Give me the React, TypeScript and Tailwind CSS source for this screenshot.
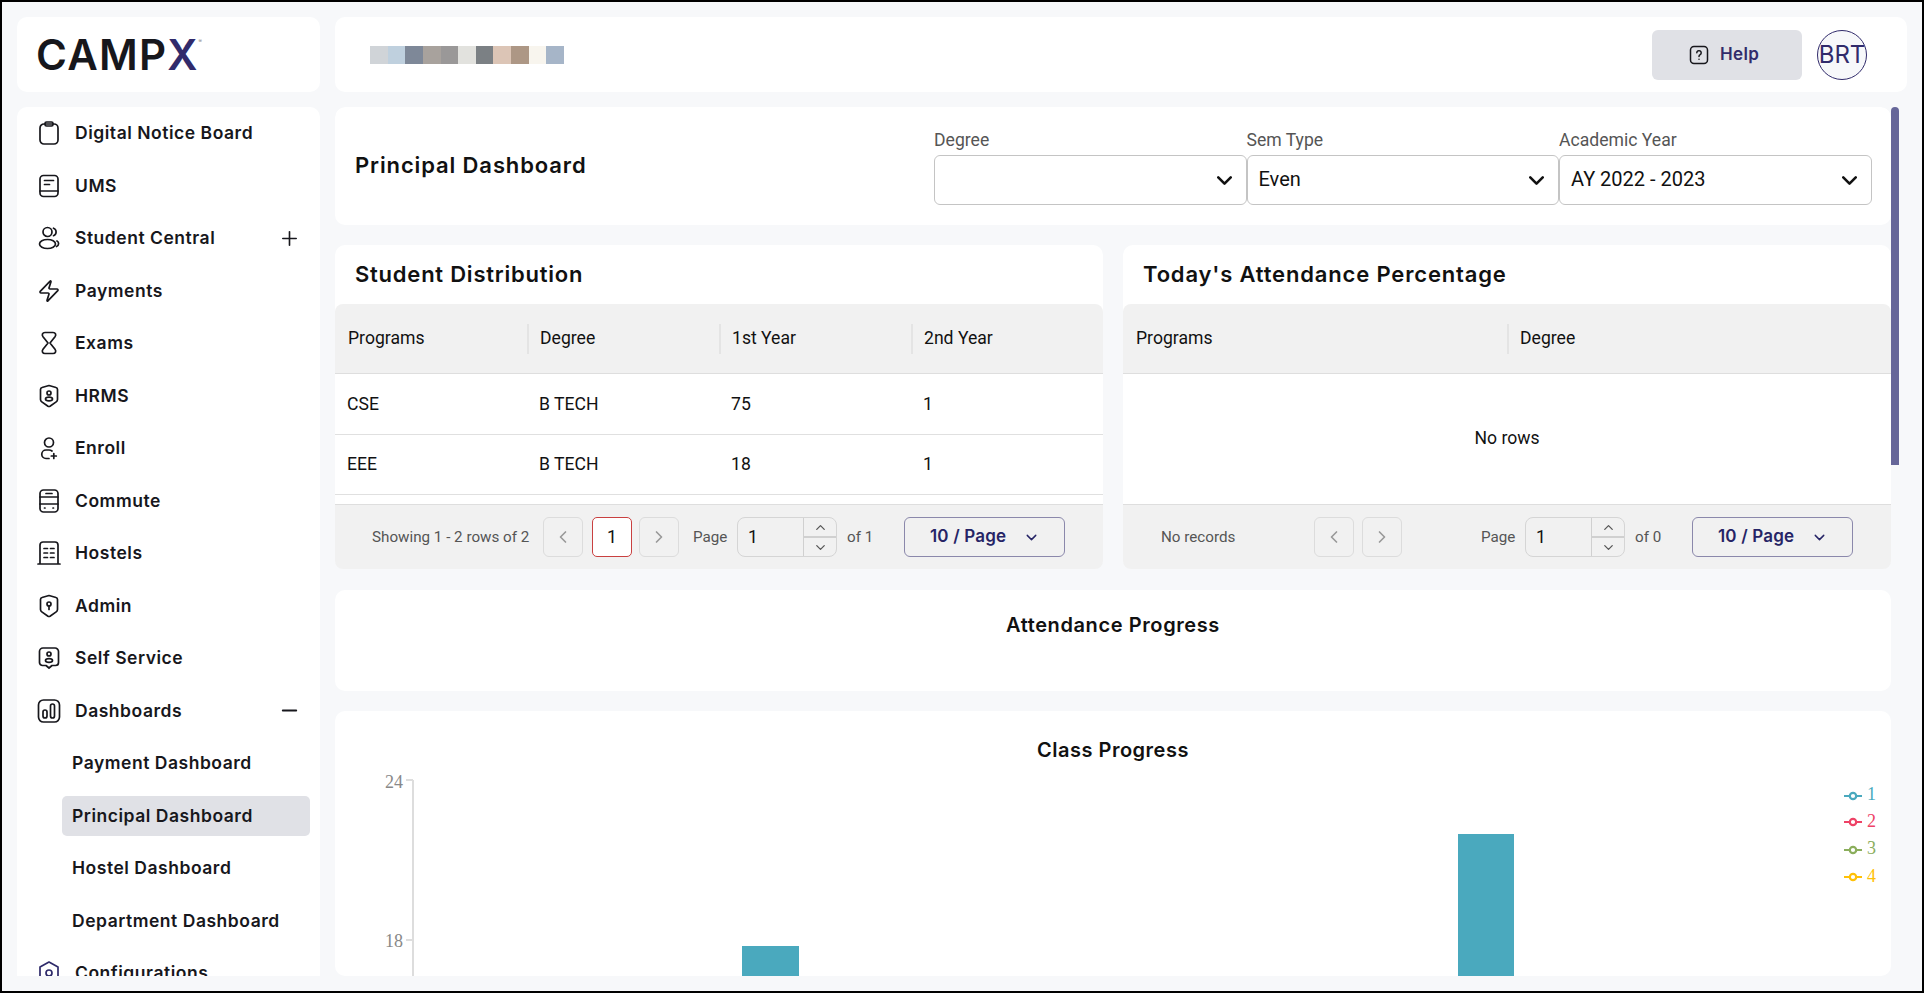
import React from "react";
import { Zap, ChevronDown, ChevronUp, ChevronLeft, ChevronRight, Plus, Minus } from "lucide-react";

const S = ({ children, color = "#17171c" }: { children: React.ReactNode; color?: string }) => (
  <svg width="24" height="24" viewBox="0 0 24 24" fill="none" stroke={color} strokeWidth="1.7" strokeLinecap="round" strokeLinejoin="round" className="shrink-0">
    {children}
  </svg>
);

const shield = "M12 1.5 19 3.5a2 2 0 0 1 1.5 2v10a3 3 0 0 1-1.3 2.4L13 22.2a2 2 0 0 1-2 0l-6.2-4.3a3 3 0 0 1-1.3-2.4v-10a2 2 0 0 1 1.5-2z";

const items: { label: string; icon: React.ReactNode; sign?: "plus" | "minus" }[] = [
  { label: "Digital Notice Board", icon: <S><rect x="3" y="3" width="18" height="20" rx="4" /><rect x="8" y="1" width="8" height="4" rx="1.5" /></S> },
  { label: "UMS", icon: <S><rect x="3" y="1.5" width="18" height="21" rx="3.5" /><path d="M3 17h18M7.5 6.5h9M7.5 10.5h5" /></S> },
  { label: "Student Central", sign: "plus", icon: <S><circle cx="10.5" cy="6" r="4.5" /><ellipse cx="10.5" cy="18" rx="8" ry="4.5" /><path d="M16.5 2.2a4 4 0 0 1 0 7.5M20 15c2.2 1 2.2 4.5-.5 5.5" /></S> },
  { label: "Payments", icon: <Zap size={24} strokeWidth={1.7} color="#17171c" className="shrink-0" /> },
  { label: "Exams", icon: <S><path d="M8 1.500h8c2.500 0 3.500 2.200 2 4.300L13 12l5 6.200c1.500 2.100.5 4.300-2 4.300H8c-2.500 0-3.500-2.200-2-4.300L11 12 6 5.800C4.500 3.700 5.500 1.500 8 1.500z" /></S> },
  { label: "HRMS", icon: <S><path d={shield} /><circle cx="12" cy="9" r="2" /><ellipse cx="12" cy="15" rx="3.5" ry="1.8" /></S> },
  { label: "Enroll", icon: <S><circle cx="12" cy="6.5" r="4.5" /><path d="M15 15a5 5 0 0 0-3-1H9a4.2 4.2 0 0 0 0 8.5h3M16.8 17.5v5M14.3 20h5" /></S> },
  { label: "Commute", icon: <S><rect x="3" y="1" width="18" height="22" rx="3.5" /><path d="M3 8h18M3 15h18M9 4.5h6M7.5 19h.5M16 19h.5" /></S> },
  { label: "Hostels", icon: <S><path d="M3 23V4a3 3 0 0 1 3-3h12a3 3 0 0 1 3 3v19M1 23h22M7 7.500h3.500M13.500 7.500h3.500M7 12h3.500M13.500 12h3.500M7 16.500h3.500M13.500 16.500h3.500" /></S> },
  { label: "Admin", icon: <S><path d={shield} /><circle cx="12" cy="10" r="2" /><path d="M12 12v3.5" /></S> },
  { label: "Self Service", icon: <S><path d="M6 2h12a3.5 3.5 0 0 1 3.5 3.5v11a3 3 0 0 1-3 3H15l-3 2.5L9 19.500H5.500a3 3 0 0 1-3-3v-11A3.500 3.500 0 0 1 6 2z" /><circle cx="12" cy="8" r="2" /><ellipse cx="12" cy="14.500" rx="3.500" ry="1.800" /></S> },
  { label: "Dashboards", sign: "minus", icon: <S><rect x="1.500" y="1" width="21" height="22" rx="5" /><rect x="6" y="11" width="4" height="8" rx="2" /><rect x="13.500" y="5" width="4" height="14" rx="2" /></S> },
];

const subs = ["Payment Dashboard", "Principal Dashboard", "Hostel Dashboard", "Department Dashboard"];
const blocks = ["#d0d4d8", "#bfd0de", "#7e8898", "#a8a29d", "#9a9898", "#e2e2de", "#7b8084", "#dcc5b6", "#ad9785", "#f8f5ee", "#a6b5c8"];

const Select = ({ label, value }: { label: string; value: string }) => (
  <div className="w-[312.500px] flex flex-col">
    <div className="h-[30px] flex items-center text-[17.600px] text-[#555555] font-['Roboto',sans-serif]">{label}</div>
    <div className="h-[50px] border border-[#c4c4c4] rounded-[6px] bg-white flex items-center justify-between pl-[11px] pr-[9px] text-[20px] text-[#111111] font-['Roboto',sans-serif]">
      <span className="-mt-[2px]">{value}</span>
      <ChevronDown size={25} strokeWidth={2.5} color="#111" />
    </div>
  </div>
);

const PagerBtn = ({ children }: { children: React.ReactNode }) => (
  <div className="w-[40px] h-[40px] border border-[#dcdcdc] rounded-[6px] flex items-center justify-center">{children}</div>
);

const PageGroup = ({ of }: { of: string }) => (
  <>
    <span className="w-[44px] mt-[1px] text-[15.200px] text-[#555555]">Page</span>
    <div className="w-[100px] h-[40px] border border-[#d5d5d5] rounded-[8px] flex items-stretch overflow-hidden">
      <div className="w-[66px] flex items-center pl-[10px] text-[17.600px] text-[#111111] border-r border-[#d0d0d0]">1</div>
      <div className="flex-1 flex flex-col">
        <div className="flex-1 flex items-center justify-center border-b-2 border-[#d0d0d0]"><ChevronUp size={15} color="#555" /></div>
        <div className="flex-1 flex items-center justify-center"><ChevronDown size={15} color="#555" /></div>
      </div>
    </div>
    <span className="ml-[10px] mt-[1px] w-[57px] text-[15.200px] text-[#555555]">of {of}</span>
    <div className="w-[161px] h-[40px] border border-[#8b88ab] rounded-[6px] flex items-center pl-[25px] gap-[13px] text-[#262466] text-[17px] font-semibold font-['Inter',sans-serif] tracking-[0.01em]">
      <span className="w-[80px] whitespace-nowrap">10 / Page</span>
      <ChevronDown size={17} strokeWidth={2} color="#262466" />
    </div>
  </>
);

const TableHead = ({ cols, w }: { cols: string[]; w: string }) => (
  <div className="h-[70px] bg-[#f1f1f1] rounded-t-[8px] border-b border-[#dedede] flex items-center">
    {cols.map((c) => (
      <div key={c} className={`${w} h-[30px] flex items-center pl-[11px] first:pl-[13px] border-l-2 first:border-l-0 border-[#e4e4e4] text-[17.600px] text-[#111111]`}>{c}</div>
    ))}
  </div>
);

const Row = ({ vals }: { vals: string[] }) => (
  <div className="h-[60.500px] border-b border-[#e0e0e0] flex items-center text-[17.600px] text-[#111111]">
    {vals.map((v, i) => (
      <div key={i} className="w-[192px] pl-[12px]">{v}</div>
    ))}
  </div>
);

export default function App() {
  const title = "font-['Inter',sans-serif] font-semibold text-[#111111]";
  return (
    <div className="w-[1924px] h-[993px] box-border border-2 border-black bg-[#f7f8fa] p-[15px] flex flex-col gap-[15px] overflow-hidden font-['Roboto',sans-serif]">
      {/* top */}
      <div className="h-[75px] flex gap-[15px] shrink-0">
        <div className="w-[303px] bg-white rounded-[10px] flex items-center pl-[19px]">
          <span className="relative font-['Inter',sans-serif] font-semibold text-[42px] leading-none tracking-[0.03em] text-[#17171c]">
            CAMP<span className="text-[#312b6b]">X</span>
            <span className="absolute -right-[3px] top-[5px] text-[5px] leading-none font-normal tracking-normal text-[#777777]">®</span>
          </span>
        </div>
        <div className="flex-1 bg-white rounded-[10px] flex items-center justify-between pl-[35px] pr-[40px]">
          <div className="flex">
            {blocks.map((c, i) => (
              <div key={i} className="w-[17.640px] h-[18px]" style={{ backgroundColor: c }} />
            ))}
          </div>
          <div className="flex items-center gap-[15px]">
            <div className="w-[150px] h-[50px] bg-[#e0e1e6] rounded-[6px] flex items-center pl-[37px] gap-[11px]">
              <svg width="20" height="20" viewBox="0 0 20 20" fill="none" stroke="#17171c" strokeWidth="1.5" strokeLinecap="round">
                <rect x="1.500" y="1.500" width="17" height="17" rx="3.500" />
                <path d="M7.800 7.800a2.200 2.200 0 1 1 3.400 1.900c-.7.400-1.200.9-1.200 1.700M10 14.200h.01" />
              </svg>
              <span className="font-['Inter',sans-serif] font-semibold text-[17px] tracking-[0.02em] text-[#312b6b]">Help</span>
            </div>
            <div className="w-[50px] h-[50px] rounded-full border border-[#312b6b] bg-[#f7f8fa] flex items-center justify-center text-[24px] text-[#312b6b] font-['Inter',sans-serif] overflow-visible whitespace-nowrap">BRT</div>
          </div>
        </div>
      </div>

      {/* bottom */}
      <div className="flex-1 min-h-0 flex gap-[15px]">
        <div className="w-[303px] bg-white rounded-t-[10px] overflow-hidden font-['Inter',sans-serif] font-semibold text-[17.500px] text-[#17171c] tracking-[0.03em]">
          {items.map((it) => (
            <div key={it.label} className="h-[52.500px] flex items-center pl-[20px] gap-[14px] relative">
              {it.icon}
              <span className="whitespace-nowrap">{it.label}</span>
              {it.sign === "plus" && <Plus size={23} strokeWidth={1.7} color="#17171c" className="absolute left-[261px]" />}
              {it.sign === "minus" && <Minus size={23} strokeWidth={2} color="#17171c" className="absolute left-[261px]" />}
            </div>
          ))}
          {subs.map((s, i) => (
            <div key={s} className="h-[52.500px] flex items-center pl-[45px] pr-[10px]">
              <div className={i === 1 ? "h-[40px] w-full rounded-[5px] bg-[#e0e1e6] flex items-center pl-[10px] whitespace-nowrap" : "h-[40px] w-full flex items-center pl-[10px] whitespace-nowrap"}>{s}</div>
            </div>
          ))}
          <div className="h-[52.500px] flex items-center pl-[20px] gap-[14px]">
            <S color="#2e2a6a"><path d="M12 1 21 6v12l-9 5-9-5V6z" /><circle cx="12" cy="12" r="3" /></S>
            <span>Configurations</span>
          </div>
        </div>

        {/* main */}
        <div className="flex-1 min-w-0 flex gap-0 overflow-hidden">
          <div className="w-[1556px] shrink-0 overflow-hidden rounded-[10px]">
            <div className="flex flex-col">
              {/* heading */}
              <div className="h-[118px] bg-white rounded-[10px] flex items-center justify-between pl-[20px] pr-[20px]">
                <div className={`${title} text-[22px] tracking-[0.04em] -mt-[1px]`}>Principal Dashboard</div>
                <div className="flex -mt-[2px]">
                  <Select label="Degree" value="" />
                  <Select label="Sem Type" value="Even" />
                  <div className="w-[312px]"><Select label="Academic Year" value="AY 2022 - 2023" /></div>
                </div>
              </div>

              <div className="mt-[20px] h-[324px] flex gap-[20px]">
                {/* left table */}
                <div className="w-[768px] bg-white rounded-[10px] flex flex-col">
                  <div className={`h-[59px] flex items-center pl-[20px] ${title} text-[22px] tracking-[0.035em]`}>Student Distribution</div>
                  <TableHead cols={["Programs", "Degree", "1st Year", "2nd Year"]} w="w-[192px]" />
                  <Row vals={["CSE", "B TECH", "75", "1"]} />
                  <Row vals={["EEE", "B TECH", "18", "1"]} />
                  <div className="flex-1" />
                  <div className="h-[65px] bg-[#f1f1f1] border-t border-[#dedede] rounded-b-[8px] flex items-center pl-[37px] text-[15.200px]">
                    <div className="w-[321px] flex items-center">
                      <span className="w-[171px] mt-[1px] whitespace-nowrap text-[#555555]">Showing 1 - 2 rows of 2</span>
                      <PagerBtn><ChevronLeft size={20} color="#999" /></PagerBtn>
                      <div className="ml-[9px] w-[40px] h-[40px] border border-[#c94040] rounded-[5px] bg-white flex items-center justify-center text-[17.600px] text-[#111111]">1</div>
                      <div className="ml-[7px]"><PagerBtn><ChevronRight size={20} color="#999" /></PagerBtn></div>
                    </div>
                    <PageGroup of="1" />
                  </div>
                </div>

                {/* right table */}
                <div className="w-[768px] bg-white rounded-[10px] flex flex-col">
                  <div className={`h-[59px] flex items-center pl-[20px] ${title} text-[22px] tracking-[0.038em]`}>Today's Attendance Percentage</div>
                  <TableHead cols={["Programs", "Degree"]} w="w-[384px]" />
                  <div className="flex-1 flex items-center justify-center pb-[2px] text-[17.600px] text-[#111111]">No rows</div>
                  <div className="h-[65px] bg-[#f1f1f1] border-t border-[#dedede] rounded-b-[8px] flex items-center pl-[38px] text-[15.200px]">
                    <div className="w-[320px] flex items-center">
                      <span className="w-[153px] mt-[1px] text-[#555555]">No records</span>
                      <PagerBtn><ChevronLeft size={20} color="#999" /></PagerBtn>
                      <div className="ml-[8px]"><PagerBtn><ChevronRight size={20} color="#999" /></PagerBtn></div>
                    </div>
                    <PageGroup of="0" />
                  </div>
                </div>
              </div>

              <div className="mt-[21px] h-[101px] bg-white rounded-[10px] flex justify-center pt-[22px]">
                <div className={`${title} text-[20px] tracking-[0.03em] h-[26px] leading-[26px]`}>Attendance Progress</div>
              </div>

              <div className="mt-[20px] h-[600px] bg-white rounded-[10px]">
                <div className="h-[58px] pt-[21px] flex justify-center">
                  <div className={`${title} text-[20px] tracking-[0.025em] h-[37px] leading-[37px]`}>Class Progress</div>
                </div>
                <svg width="1556" height="400" className="block">
                  <path d="M78 11V400M71 11H78M71 171H78" stroke="#dddddd" strokeWidth="2" fill="none" />
                  <g fontFamily="'Liberation Serif',serif" fontSize="18" fill="#888888" textAnchor="end">
                    <text x="68" y="19">24</text>
                    <text x="68" y="178">18</text>
                  </g>
                  <rect x="407" y="177" width="57" height="223" fill="#4aa9be" />
                  <rect x="1123" y="65" width="56" height="335" fill="#4aa9be" />
                  {[
                    { c: "#4aa9be", y: 27, b: 30.5, t: "1" },
                    { c: "#ee4266", y: 53, b: 58, t: "2" },
                    { c: "#8bae5c", y: 81, b: 85, t: "3" },
                    { c: "#ffc107", y: 108, b: 113, t: "4" },
                  ].map((l) => (
                    <g key={l.t}>
                      <path d={`M1509 ${l.y}h18`} stroke={l.c} strokeWidth="2.200" />
                      <circle cx="1518" cy={l.y} r="3.200" fill="#fff" stroke={l.c} strokeWidth="2.200" />
                      <text x="1532" y={l.b} fontFamily="'Liberation Serif',serif" fontSize="18" fill={l.c}>{l.t}</text>
                    </g>
                  ))}
                </svg>
              </div>
            </div>
          </div>
          <div className="w-[8px] h-[358px] bg-[#666699] rounded-t-[4px]" />
        </div>
      </div>
    </div>
  );
}
